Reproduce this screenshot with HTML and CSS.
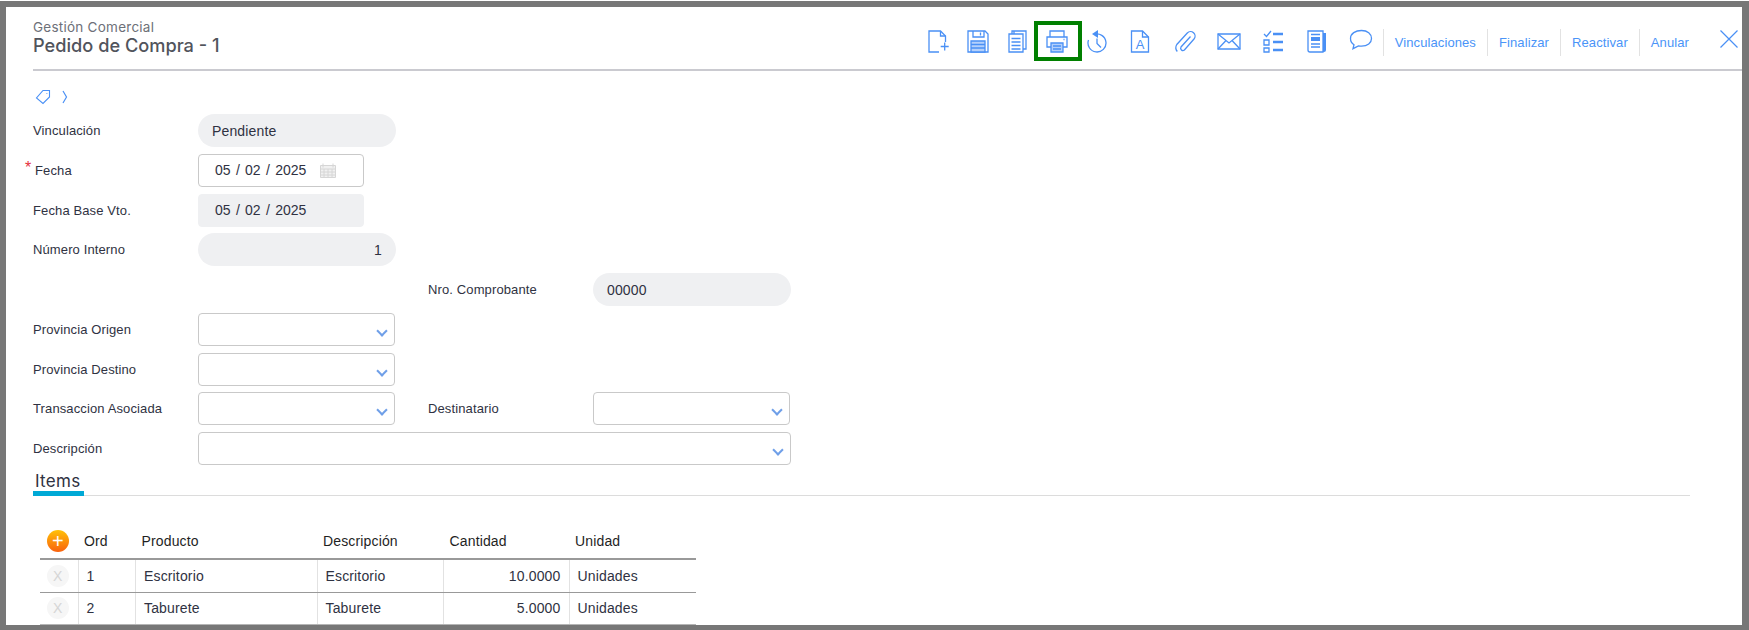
FILE: index.html
```html
<!DOCTYPE html>
<html lang="es">
<head>
    <meta charset="UTF-8">
    <title>Pedido de Compra - 1</title>
    <link rel="stylesheet" href="styles.css">
</head>
<body>
    <div class="frame">
        <header class="top">
            <div class="heading">
                <div class="module">Gestión Comercial</div>
                <h1>Pedido de Compra - 1</h1>
            </div>
            <nav class="toolbar">
                <a class="tool">
                    <svg viewBox="0 0 24 24"><path d="M12 23H2V2h11.5l5 5v6"/><path d="M13.5 2v5h5"/><path d="M17.7 13.5v8M13.7 17.5h8"/></svg>
                </a>
                <a class="tool">
                    <svg viewBox="0 0 24 24"><path d="M2 2h17l3 3v18H2z"/><path d="M7 2v6h11V2"/><path d="M14.5 3.5v3"/><path class="soft" d="M5 12h14v11H5z"/><path d="M5 15.5h14M5 19h14"/></svg>
                </a>
                <a class="tool">
                    <svg viewBox="0 0 24 24"><path d="M6 5V2h14v18h-3"/><path d="M8 2v3"/><path d="M3 5h14v18H3z"/><path d="M5.5 9.500h9M5.500 13h9M5.500 16.500h9M5.500 20h9"/></svg>
                </a>
                <a class="tool tool-marked">
                    <svg viewBox="0 0 24 24"><path d="M5 8V2h14v6"/><path d="M6 18H2V8h20v10h-4"/><path class="soft" d="M6 14h12v9H6z"/><path d="M8 17h8M8 20h8"/><path d="M18.500 10.500h1"/></svg>
                </a>
                <a class="tool">
                    <svg viewBox="0 0 24 24"><path d="M9 5.500A9 9 0 1 1 3.500 11"/><path class="solid" d="M13 1v8l-6-4z"/><path d="M12 9.500v5l4 4"/></svg>
                </a>
                <a class="tool tool-wide tool-letter">
                    <svg viewBox="0 0 24 24"><path d="M3.500 2h11l6 6v15h-17z"/><path d="M14.500 2v6h6"/><text x="12" y="20" class="icon-letter">A</text></svg>
                </a>
                <a class="tool tool-wide">
                    <svg viewBox="0 0 24 24"><path d="M17.500 7.500 8 18a2.300 2.300 0 0 0 3.400 3L21 10a4.500 4.500 0 0 0-6.700-6L3.800 15.500a6 6 0 0 0 .5 7"/></svg>
                </a>
                <a class="tool tool-wide">
                    <svg viewBox="0 0 24 24"><path d="M1 5h22v15H1z"/><path d="M1 5l11 9 11-9M1 20l8-8.500M23 20l-8-8.500"/></svg>
                </a>
                <a class="tool tool-wide">
                    <svg viewBox="0 0 24 24"><path d="M3 5l2.500 2.500L10 2"/><path d="M3 11h5v5H3zM3 19h5v4H3z"/><path class="thick" d="M12 5h10M12 13h10M12 21h10"/></svg>
                </a>
                <a class="tool tool-wide">
                    <svg viewBox="0 0 24 24"><path d="M3 2h15v21H5a2 2 0 0 1-2-2z"/><path class="solid" d="M18 4h3v17a2 2 0 0 1-2 2h-1z"/><path class="solid" d="M6 8h9v4H6z"/><path d="M6 5.500h9M6 15h9M6 18h9"/></svg>
                </a>
                <a class="tool tool-wide">
                    <svg viewBox="0 0 24 24"><path d="M12.500 1.500C6.500 1.500 1.500 4.500 1.500 9.500c0 2.800 1.500 5 3.500 6.200l-1 4 5.500-2.800c1 .2 2 .3 3 .3 6 0 10-3.200 10-7.700S18.500 1.500 12.500 1.500z"/></svg>
                </a>
                <a class="action">Vinculaciones</a>
                <a class="action">Finalizar</a>
                <a class="action">Reactivar</a>
                <a class="action">Anular</a>
            </nav>
            <a class="close">
                <svg viewBox="0 0 18 18"><path d="M.5.500l17 17M17.500.500l-17 17"/></svg>
            </a>
        </header>

        <div class="crumbs">
            <svg class="crumb-tag" viewBox="0 0 16 16"><path d="M8 1.500h6.500V8L8 14.500 1.500 9z"/><path d="M11.500 4.500h.8"/></svg>
            <svg class="crumb-arrow" viewBox="0 0 6 14"><path d="M1 1l3.500 6L1 13"/></svg>
        </div>

        <form class="form">
            <label class="lbl">Vinculación</label>
            <div class="field field-pill">Pendiente</div>

            <label class="lbl lbl-required">Fecha</label>
            <div class="field field-date">
                <span>05</span><i>/</i><span>02</span><i>/</i><span>2025</span>
                <svg class="cal" viewBox="0 0 16 15"><path d="M.5 2.500h15v12H.5z"/><path d="M3 .5v4M13 .5v4M.5 6h15M4 6v8M8 6v8M12 6v8M.5 9h15M.5 12h15"/></svg>
            </div>

            <label class="lbl">Fecha Base Vto.</label>
            <div class="field field-date field-locked">
                <span>05</span><i>/</i><span>02</span><i>/</i><span>2025</span>
            </div>

            <label class="lbl">Número Interno</label>
            <div class="field field-pill field-num">1</div>

            <div class="row-skip"></div>
            <label class="lbl col-second">Nro. Comprobante</label>
            <div class="field field-pill">00000</div>

            <label class="lbl">Provincia Origen</label>
            <div class="field field-select"></div>

            <label class="lbl">Provincia Destino</label>
            <div class="field field-select"></div>

            <label class="lbl">Transaccion Asociada</label>
            <div class="field field-select"></div>
            <label class="lbl col-second">Destinatario</label>
            <div class="field field-select"></div>

            <label class="lbl">Descripción</label>
            <div class="field field-select field-span"></div>
        </form>

        <div class="tabs"><span class="tab">Items</span></div>

        <table class="items">
            <colgroup>
                <col class="c-btn"><col class="c-ord"><col class="c-prod"><col class="c-desc"><col class="c-cant"><col class="c-uni">
            </colgroup>
            <thead>
                <tr>
                    <th><span class="add">+</span></th>
                    <th>Ord</th>
                    <th>Producto</th>
                    <th>Descripción</th>
                    <th>Cantidad</th>
                    <th>Unidad</th>
                </tr>
            </thead>
            <tbody>
                <tr>
                    <td><span class="del">X</span></td>
                    <td>1</td>
                    <td>Escritorio</td>
                    <td>Escritorio</td>
                    <td class="num">10.0000</td>
                    <td>Unidades</td>
                </tr>
                <tr>
                    <td><span class="del">X</span></td>
                    <td>2</td>
                    <td>Taburete</td>
                    <td>Taburete</td>
                    <td class="num">5.0000</td>
                    <td>Unidades</td>
                </tr>
            </tbody>
        </table>
    </div>
</body>
</html>
```

FILE: styles.css
```css
* {
    margin: 0;
    padding: 0;
    box-sizing: border-box;
}

html, body {
    height: 630px;
    overflow: hidden;
    background: #fff;
}

body {
    padding-top: 1px;
    font-family: "Liberation Sans", Arial, sans-serif;
    font-size: 13px;
    color: #2f3242;
}

.frame {
    position: relative;
    height: 629px;
    border: solid #777;
    border-width: 6px 7px 5px 6px;
    background: #fff;
    overflow: hidden;
}

/* header */
.top {
    display: flex;
    height: 64px;
    margin-left: 27px;
    border-bottom: 2px solid #cacad0;
}

.heading {
    padding-top: 13px;
    font-family: "Inter", sans-serif;
    flex: 1;
}

.module {
    font-size: 13.5px;
    line-height: 15px;
    letter-spacing: .25px;
    color: #6d7078;
}

h1 {
    font-size: 18.2px;
    line-height: 20px;
    font-weight: 500;
    color: #51545c;
}

.toolbar {
    display: flex;
    align-items: flex-start;
    margin-right: 42px;
    padding-top: 22px;
}

.tool {
    position: relative;
    display: flex;
    justify-content: center;
    width: 39.500px;
    height: 24px;
}

.tool-wide {
    width: 44px;
}

.tool-letter {
    width: 46px;
}

.tool svg {
    width: 24px;
    height: 24px;
    fill: none;
    stroke: #4a90f5;
    stroke-width: 1.300;
}

.tool .soft {
    fill: #b4d0fb;
}

.tool .solid {
    fill: #4a90f5;
    stroke: none;
}

.tool .thick {
    stroke-width: 2.600;
}

.icon-letter {
    font-family: "Liberation Sans", sans-serif;
    font-size: 13px;
    text-anchor: middle;
    fill: #4a90f5;
    stroke: none;
}

/* green box marked on the print button */
.tool-marked::after {
    content: "";
    position: absolute;
    left: -4px;
    top: -8px;
    width: 40px;
    height: 32px;
    border: 4px solid #008000;
}

.action {
    height: 27px;
    padding: 0 11px;
    border-left: 1px solid #e2e2e2;
    line-height: 27px;
    font-size: 13px;
    letter-spacing: .1px;
    color: #4a94f8;
}

.close {
    position: absolute;
    left: 1714px;
    top: 23px;
    width: 18px;
    height: 18px;
}

.close svg {
    display: block;
    fill: none;
    stroke: #4a90f5;
    stroke-width: 1.200;
}

/* breadcrumb */
.crumbs {
    display: flex;
    align-items: center;
    gap: 11px;
    height: 16px;
    margin: 18px 0 9px 29px;
}

.crumb-tag {
    width: 16px;
    height: 16px;
    fill: none;
    stroke: #4a90f5;
    stroke-width: 1.100;
}

.crumb-arrow {
    width: 6px;
    height: 14px;
    fill: none;
    stroke: #4a90f5;
    stroke-width: 1.200;
}

/* form */
.form {
    display: grid;
    grid-template-columns: 165px 198px 32px 165px 198px;
    grid-auto-rows: 33px;
    row-gap: 6.750px;
    margin-left: 27px;
    align-items: center;
}

.row-skip {
    grid-column: 1 / 4;
}

.lbl {
    grid-column: 1;
    letter-spacing: .12px;
}

.col-second {
    grid-column: 4;
}

.lbl-required {
    position: relative;
    padding-left: 2px;
}

.lbl-required::before {
    content: "*";
    position: absolute;
    left: -8px;
    top: -4px;
    font-size: 16px;
    color: #e5323c;
}

.field {
    display: flex;
    align-items: center;
    height: 33px;
    font-size: 14px;
    letter-spacing: .15px;
}

.lbl + .field {
    grid-column: 2;
}

.col-second + .field {
    grid-column: 5;
}

.field-pill {
    padding: 0 14px;
    border-radius: 17px;
    background: #eff0f2;
}

.field-num {
    justify-content: flex-end;
}

.field-date {
    width: 166px;
    padding-left: 16px;
    border: 1px solid #c9c9c9;
    border-radius: 4px;
    letter-spacing: 0;
}

.field-date i {
    width: 14.500px;
    font-style: normal;
    text-align: center;
}

.field-locked {
    border-color: #eff0f2;
    background: #eff0f2;
}

.cal {
    width: 16px;
    height: 15px;
    margin-left: 14px;
    fill: #f1f1f1;
    stroke: #d6d6d6;
    stroke-width: 1;
}

.field-select {
    position: relative;
    width: 197px;
    border: 1px solid #c9c9c9;
    border-radius: 4px;
}

.field-select::after {
    content: "";
    position: absolute;
    right: 8px;
    top: 13px;
    width: 6px;
    height: 6px;
    border: solid #6f9fe8;
    border-width: 0 2px 2px 0;
    transform: rotate(45deg);
}

.field-span {
    grid-column: 2 / 6 !important;
    width: 593px;
}

/* tabs */
.tabs {
    height: 31px;
    margin: 0 52px 0 27px;
    border-bottom: 1px solid #dcdcdc;
}

.tab {
    display: inline-block;
    width: 51px;
    height: 31px;
    padding: 6px 0 0 2px;
    border-bottom: 5px solid #00a9d6;
    font-family: "Inter", sans-serif;
    font-size: 17px;
    line-height: 20px;
    font-weight: 400;
    letter-spacing: .3px;
    color: #2f3242;
}

/* items table */
.items {
    table-layout: fixed;
    width: 656px;
    margin: 27px 0 0 34px;
    border-collapse: collapse;
    font-size: 14px;
    letter-spacing: .15px;
}

.c-btn { width: 38px; }
.c-ord { width: 57.500px; }
.c-prod { width: 181.500px; }
.c-desc { width: 126.500px; }
.c-cant { width: 125.500px; }
.c-uni { width: 127px; }

th {
    height: 36px;
    padding-left: 6px;
    border-bottom: 2px solid #999;
    text-align: left;
    font-weight: 400;
    color: #1f1f1f;
}

th:first-child, td:first-child {
    padding: 0 2px 0 0;
    text-align: center;
}

td {
    height: 33px;
    padding: 0 8px;
    border-bottom: 1px solid #999;
    border-left: 1px solid #e2e2e2;
}

td:first-child {
    border-left: 0;
}

tbody tr:last-child td {
    border-bottom-width: 2px;
    border-bottom-color: #b5b5b5;
}

.num {
    text-align: right;
}

.add, .del {
    display: inline-block;
    width: 22px;
    height: 22px;
    border-radius: 50%;
    line-height: 22px;
    text-align: center;
    vertical-align: middle;
}

.add {
    background: linear-gradient(#ffc107, #f9620f);
    font-size: 20px;
    color: #fff;
}

.del {
    background: #f6f6f6;
    color: #d5d5d5;
}
```
